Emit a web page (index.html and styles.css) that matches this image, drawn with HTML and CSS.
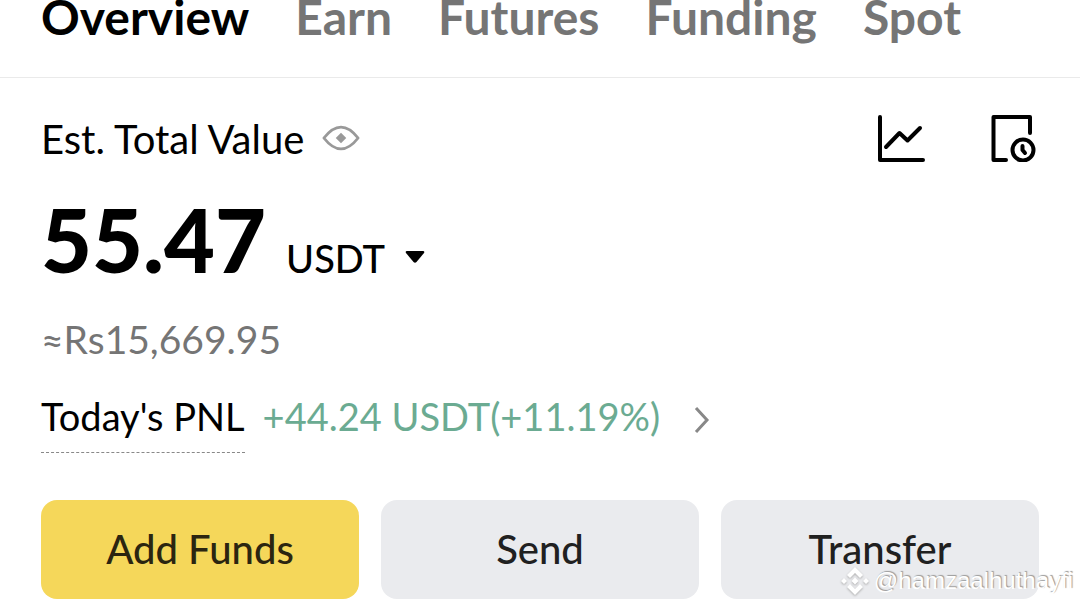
FILE: index.html
```
<!DOCTYPE html>
<html lang="en">

<head>
    <meta charset="UTF-8">
    <meta name="viewport" content="width=device-width, initial-scale=1.0">
    <title>Wallet - Overview</title>
    <link rel="stylesheet" href="styles.css">
</head>

<body>
    <nav class="tabs">
        <a href="#overview" class="active">Overview</a>
        <a href="#earn">Earn</a>
        <a href="#futures">Futures</a>
        <a href="#funding">Funding</a>
        <a href="#spot">Spot</a>
    </nav>
    <main class="wallet">
        <div class="wallet__top">
            <span class="wallet__label">Est. Total Value</span>
            <button class="icon eye" aria-label="Hide balance">
                <svg width="38" height="28" viewBox="0 0 40 28" fill="none" stroke="#999" stroke-width="3" stroke-linejoin="round">
                    <path d="M2 14C9 5 14 2.500 20 2.500S31 5 38 14C31 23 26 25.500 20 25.500S9 23 2 14Z" />
                    <path d="M20 8.500l5.500 5.500-5.500 5.500-5.500-5.500z" fill="#999" stroke="none" />
                </svg>
            </button>
            <div class="wallet__actions">
                <button class="icon" aria-label="Chart">
                    <svg width="48" height="48" viewBox="0 0 48 48" fill="none" stroke="#000" stroke-width="4" stroke-linecap="round" stroke-linejoin="round">
                        <path d="M3 3v43h43" />
                        <path d="M9 33l13.500-14 8 7.500 12.500-12.500" />
                    </svg>
                </button>
                <button class="icon" aria-label="History">
                    <svg width="48" height="48" viewBox="0 0 48 48" fill="none" stroke="#000" stroke-width="4" stroke-linecap="round" stroke-linejoin="round">
                        <path d="M15 46H2.500V3H39v16" />
                        <circle cx="32" cy="36" r="10.500" />
                        <path d="M31.500 32v4l2.500 3" />
                    </svg>
                </button>
            </div>
        </div>
        <div class="balance">
            <span class="balance__amount">55.47</span>
            <button class="balance__unit">USDT
                <svg width="20" height="14" viewBox="0 0 20 14">
                    <path d="M2 0h16q2 0 1 2l-7.500 9q-1.500 1.500-3 0L1 2q-1-2 1-2z" />
                </svg>
            </button>
        </div>
        <div class="fiat">≈Rs15,669.95</div>
        <a href="#pnl" class="pnl">
            <span class="pnl__label">Today's PNL</span>
            <span class="pnl__value">+44.24 USDT(+11.19%)</span>
            <svg width="16" height="28" viewBox="0 0 16 28" fill="none" stroke="#888" stroke-width="3">
                <path d="M2 2l11 12L2 26" />
            </svg>
        </a>
        <div class="buttons">
            <button class="primary">Add Funds</button>
            <button>Send</button>
            <button>Transfer</button>
        </div>
    </main>
    <div class="watermark">
        <svg width="28" height="28" viewBox="0 0 28 28" fill="#fff">
            <path d="M14 0l8 8-3 3-5-5-5 5-3-3zM14 28l8-8-3-3-5 5-5-5-3 3zM3 11l3 3-3 3-3-3zM25 11l3 3-3 3-3-3zM14 10.500l3.500 3.500-3.500 3.500-3.500-3.500z" />
        </svg>
        <span>@hamzaalhuthayfi</span>
    </div>
</body>

</html>
```
FILE: styles.css
```
* {
    box-sizing: border-box;
}

body {
    margin: 0;
    font-family: Lato, "Liberation Sans", sans-serif;
    background-color: #fff;
    color: #000;
}

button {
    padding: 0;
    border: none;
    background: none;
    color: inherit;
    font-family: inherit;
    cursor: pointer;
}

a {
    color: inherit;
    text-decoration: none;
}

svg {
    display: block;
}

.tabs {
    display: flex;
    gap: 46px;
    padding: 0 41px 44px;
    border-bottom: 1px solid #eaeaea;
    font-size: 48px;
    font-weight: 700;
    line-height: 33px;
    color: #757575;
}

.tabs .active {
    color: #000;
}

.wallet {
    padding: 34px 41px 8px;
}

.wallet__top {
    display: flex;
    align-items: center;
    height: 52px;
}

.wallet__label {
    padding-top: 2px;
    font-size: 40px;
}

.eye {
    margin-left: 18px;
}

.wallet__actions {
    display: flex;
    gap: 66px;
    margin-left: auto;
}

.balance {
    display: flex;
    align-items: baseline;
    gap: 20px;
    margin-top: 25px;
    line-height: 100px;
}

.balance__amount {
    font-size: 88px;
    font-weight: 900;
}

.balance__unit {
    display: flex;
    align-items: center;
    gap: 20px;
    font-size: 38px;
    font-weight: 500;
}

.fiat {
    margin-top: 26px;
    font-size: 39px;
    line-height: 48px;
    color: #757575;
}

.pnl {
    display: flex;
    align-items: baseline;
    gap: 18px;
    margin-top: 23px;
    font-size: 38px;
    line-height: 60px;
}

.pnl__label {
    padding-bottom: 6px;
    border-bottom: 1px dashed #888;
}

.pnl__value {
    color: #6bab92;
}

.pnl svg {
    align-self: center;
    margin-left: 16px;
}

.buttons {
    display: grid;
    grid-template-columns: repeat(3, 1fr);
    gap: 22px;
    margin-top: 47px;
}

.buttons button {
    height: 99px;
    padding-bottom: 2px;
    border-radius: 16px;
    background-color: #eaebee;
    color: #202020;
    font-size: 40px;
    font-weight: 500;
}

.buttons .primary {
    background-color: #f5d75a;
    color: #2b2510;
}

.watermark {
    position: absolute;
    right: 7px;
    bottom: 11px;
    display: flex;
    align-items: center;
    gap: 5px;
    font-family: "Liberation Sans", sans-serif;
    font-size: 24px;
    line-height: 30px;
    color: #fff;
    text-shadow: 1px -1px 1px #999;
}

.watermark svg {
    filter: drop-shadow(0 1px 1px #aaa);
}
```
